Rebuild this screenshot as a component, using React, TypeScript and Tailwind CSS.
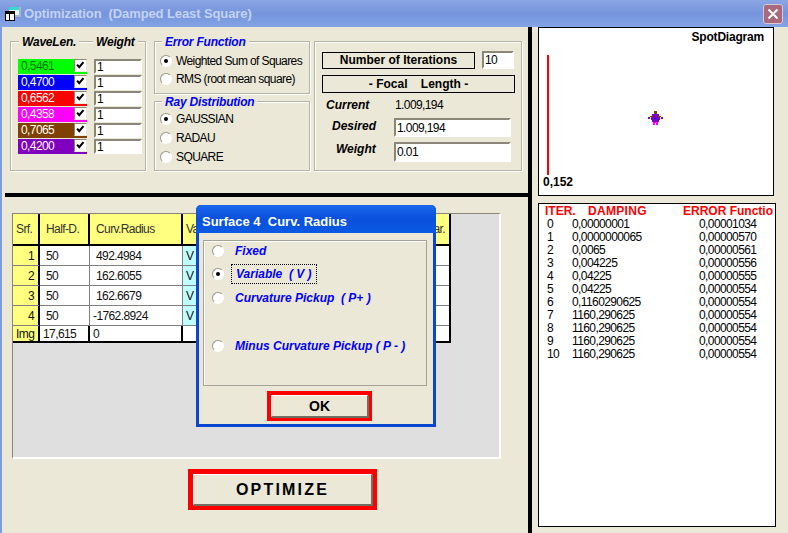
import React from "react";

const ui = "font-['Liberation_Sans',Arial,sans-serif]";

const waves = [
  { v: "0,5461", bg: "bg-[#00ff00]", text: "text-[#007000]" },
  { v: "0,4700", bg: "bg-[#0000ff]", text: "text-white" },
  { v: "0,6562", bg: "bg-[#ff0000]", text: "text-white" },
  { v: "0,4358", bg: "bg-[#ff00ff]", text: "text-white" },
  { v: "0,7065", bg: "bg-[#804000]", text: "text-white" },
  { v: "0,4200", bg: "bg-[#8000c0]", text: "text-white" },
];

const surfaces = [
  ["1", "50", "492.4984"],
  ["2", "50", "162.6055"],
  ["3", "50", "162.6679"],
  ["4", "50", "-1762.8924"],
];

const iters = [
  ["0", "0,00000001", "0,00001034"],
  ["1", "0,0000000065", "0,00000570"],
  ["2", "0,0065", "0,00000561"],
  ["3", "0,004225", "0,00000556"],
  ["4", "0,04225", "0,00000555"],
  ["5", "0,04225", "0,00000554"],
  ["6", "0,1160290625", "0,00000554"],
  ["7", "1160,290625", "0,00000554"],
  ["8", "1160,290625", "0,00000554"],
  ["9", "1160,290625", "0,00000554"],
  ["10", "1160,290625", "0,00000554"],
];

function Radio({ on }: { on?: boolean }) {
  return (
    <span className="w-[12px] h-[12px] shrink-0 rounded-full bg-white border border-[#9a968a] border-r-white border-b-white flex items-center justify-center">
      {on && <span className="w-[4px] h-[4px] rounded-full bg-black" />}
    </span>
  );
}

function Sunken({ children, className }: { children: React.ReactNode; className: string }) {
  return (
    <div className={`bg-white border-2 border-[#8a8778] border-r-white border-b-white flex items-center pl-[1px] leading-none text-black ${className}`}>
      {children}
    </div>
  );
}

function Legend({ children, className }: { children: React.ReactNode; className: string }) {
  return (
    <span className={`absolute top-[-7px] bg-[#ebe8d8] px-[3px] text-[12px] tracking-[-0.2px] leading-[14px] font-bold italic whitespace-nowrap ${className}`}>
      {children}
    </span>
  );
}

function Group({ children, className }: { children: React.ReactNode; className: string }) {
  return <div className={`relative border border-[#b5b3a6] shadow-[inset_1px_1px_0_#fff,1px_1px_0_#fff] ${className}`}>{children}</div>;
}

function Check() {
  return (
    <svg viewBox="0 0 13 13" className="w-[13px] h-[13px] shrink-0 bg-white border border-[#8a8778] border-r-[#ebe8d8] border-b-[#ebe8d8]">
      <path d="M2.5 5.5 L5 8.5 L10 2.5" fill="none" stroke="black" strokeWidth="2.5" />
    </svg>
  );
}

function RedButton({ label, className, inner }: { label: string; className: string; inner: string }) {
  return (
    <div className={`border-[#ff0000] ${className}`}>
      <div className={`w-full h-full bg-[#ebe8d8] border border-white border-r-[#716f64] border-b-[#716f64] shadow-[1px_1px_0_#716f64] flex items-center justify-center text-black font-bold ${inner}`}>
        {label}
      </div>
    </div>
  );
}

function SpotDots() {
  return (
    <svg viewBox="0 0 15 14" className="absolute left-[109px] top-[83px] w-[15px] h-[14px]" shapeRendering="crispEdges">
      <rect x="6" y="0" width="3" height="3" fill="#804000" />
      <rect x="4" y="3" width="7" height="2" fill="#8000c0" />
      <rect x="2" y="5" width="11" height="1" fill="#804000" />
      <rect x="5" y="5" width="5" height="1" fill="#8000c0" />
      <rect x="0" y="6" width="2" height="2" fill="#8000c0" />
      <rect x="13" y="6" width="2" height="2" fill="#8000c0" />
      <rect x="3" y="6" width="9" height="3" fill="#8000c0" />
      <rect x="6" y="7" width="3" height="1" fill="#0000ff" />
      <rect x="4" y="9" width="7" height="2" fill="#8000c0" />
      <rect x="5" y="11" width="5" height="3" fill="#ff00ff" />
      <rect x="7" y="12" width="1" height="2" fill="#ffffff" />
    </svg>
  );
}

export default function App() {
  return (
    <div className={`${ui} relative w-[788px] h-[533px] overflow-hidden bg-[#ebe8d8] flex flex-col text-[12px] tracking-[-0.6px] text-black`}>
      {/* title bar */}
      <div className="h-[27px] shrink-0 bg-gradient-to-b from-[#8aa6e4] via-[#7694dc] to-[#83a4e6] flex items-center pl-[5px] pr-[5px]">
        <svg viewBox="0 0 16 14" className="w-[16px] h-[14px] shrink-0">
          <rect x="5" y="0" width="11" height="10" fill="#a9b4cf" />
          <rect x="4" y="0" width="10" height="8" fill="#e8f8f8" />
          <rect x="4" y="0" width="10" height="3" fill="#38d8d0" />
          <rect x="0.5" y="4.5" width="9" height="9" fill="#fff" stroke="#000" />
          <rect x="1" y="5" width="8" height="2" fill="#000" />
          <rect x="4" y="7" width="1" height="6" fill="#000" />
        </svg>
        <span className="ml-[3px] mt-[1px] text-[13px] tracking-[-0.1px] font-bold text-[#c3d2f3] whitespace-pre">Optimization  (Damped Least Square)</span>
        <div className="ml-auto w-[20px] h-[20px] rounded-[3px] bg-[#a8687e] border border-[#d8c8d0] flex items-center justify-center">
          <svg viewBox="0 0 12 12" className="w-[12px] h-[12px]">
            <path d="M1.5 1.5 L10.5 10.5 M10.5 1.5 L1.5 10.5" stroke="white" strokeWidth="2" />
          </svg>
        </div>
      </div>

      <div className="flex-1 flex border-l-2 border-[#7f9de2] min-h-0">
        {/* left side */}
        <div className="w-[526px] shrink-0 flex flex-col">
          <div className="h-[166px] shrink-0 pt-[14px] pl-[8px] flex gap-[8px]">
            <Group className="w-[136px] h-[130px] pt-[17px] pl-[7px]">
              <Legend className="left-[8px]">WaveLen.</Legend>
              <Legend className="left-[82px]">Weight</Legend>
              <div className="flex flex-col gap-[1px]">
                {waves.map((w) => (
                  <div key={w.v} className="flex items-start h-[15px]">
                    <div className={`w-[69px] h-[15px] flex items-start justify-between ${w.bg}`}>
                      <span className={`pl-[3px] leading-[14px] ${w.text}`}>{w.v}</span>
                      <Check />
                    </div>
                    <Sunken className="ml-[7px] w-[48px] h-[15px]">1</Sunken>
                  </div>
                ))}
              </div>
            </Group>

            <div className="w-[156px] flex flex-col gap-[7px]">
              <Group className="h-[53px] pt-[13px] pl-[5px] flex flex-col gap-[6px]">
                <Legend className="left-[7px] text-[#0000ff]">Error Function</Legend>
                <label className="flex items-center gap-[4px] h-[12px] whitespace-nowrap">
                  <Radio on />
                  Weighted Sum of Squares
                </label>
                <label className="flex items-center gap-[4px] h-[12px] whitespace-nowrap">
                  <Radio />
                  RMS (root mean square)
                </label>
              </Group>
              <Group className="h-[70px] pt-[11px] pl-[5px] flex flex-col gap-[7px]">
                <Legend className="left-[7px] text-[#0000ff]">Ray Distribution</Legend>
                <label className="flex items-center gap-[4px] h-[12px]">
                  <Radio on />
                  GAUSSIAN
                </label>
                <label className="flex items-center gap-[4px] h-[12px]">
                  <Radio />
                  RADAU
                </label>
                <label className="flex items-center gap-[4px] h-[12px]">
                  <Radio />
                  SQUARE
                </label>
              </Group>
            </div>

            <Group className="w-[208px] h-[130px] pt-[9px] pl-[7px] ml-[-4px]">
              <div className="flex items-center">
                <div className="w-[153px] h-[17px] border border-black flex items-center justify-center tracking-normal font-bold">Number of Iterations</div>
                <Sunken className="ml-[7px] w-[32px] h-[18px]">10</Sunken>
              </div>
              <div className="mt-[6px] w-[193px] h-[18px] border border-black flex items-center justify-center tracking-normal font-bold whitespace-pre">- Focal    Length -</div>
              <div className="mt-[3px] h-[18px] flex items-center">
                <span className="w-[73px] pl-[4px] tracking-normal font-bold italic">Current</span>
                <span>1.009,194</span>
              </div>
              <div className="mt-[4px] flex items-center">
                <span className="w-[72px] pl-[10px] pb-[4px] leading-[14px] tracking-normal font-bold italic">Desired</span>
                <Sunken className="w-[117px] h-[19px]">1.009,194</Sunken>
              </div>
              <div className="mt-[5px] flex items-center">
                <span className="w-[72px] pl-[14px] pb-[6px] leading-[14px] tracking-normal font-bold italic">Weight</span>
                <Sunken className="w-[117px] h-[20px]">0.01</Sunken>
              </div>
            </Group>
          </div>

          <div className="ml-[3px] h-[4px] shrink-0 bg-black" />

          <div className="flex-1 pt-[16px] pl-[10px]">
            <div className="w-[489px] h-[246px] bg-[#dfdfdf] border-t border-l border-[#8a8778] border-r-2 border-b-2 border-r-white border-b-white">
              <div className="w-[438px] grid grid-cols-[27px_50px_93px_20px_1fr] grid-rows-[32px_20px_20px_20px_20px_15px] border-b-2 border-r-2 border-black bg-white text-[#111]">
                {["Srf.", "Half-D.", "Curv.Radius", "Va", "Var."].map((h, i) => (
                  <div key={i} className={`bg-[#ffff80] text-[#333] flex items-center border-b-2 border-black ${i < 3 ? "border-r-2" : ""} ${i === 0 ? "pl-[3px]" : i === 3 ? "pl-[3px]" : i === 4 ? "justify-end pr-[4px]" : "pl-[6px]"}`}>
                    {h}
                  </div>
                ))}
                {surfaces.map((s) => (
                  <React.Fragment key={s[0]}>
                    <div className="bg-[#ffff80] border-r-2 border-b border-r-black border-b-[#808080] flex items-center justify-end pr-[4px]">{s[0]}</div>
                    <div className="border-r border-b border-[#808080] flex items-center pl-[6px]">{s[1]}</div>
                    <div className="border-r border-b border-[#808080] flex items-center pl-[6px]">
                      <span className={s[2].startsWith("-") ? "ml-[-3px]" : ""}>{s[2]}</span>
                    </div>
                    <div className="bg-[#c0ffff] border-r border-b border-[#808080] flex items-center pl-[3px]">V</div>
                    <div className="border-b border-[#808080]" />
                  </React.Fragment>
                ))}
                <div className="bg-[#ffff80] border-r-2 border-black flex items-center pl-[3px]">Img</div>
                <div className="border-r-2 border-black flex items-center pl-[3px]">17,615</div>
                <div className="border-r-2 border-black flex items-center pl-[3px]">0</div>
                <div className="border-r border-[#808080]" />
                <div />
              </div>
            </div>
            <RedButton
              label="OPTIMIZE"
              className="ml-[176px] mt-[10px] w-[189px] h-[41px] border-[5px]"
              inner="text-[16px] tracking-[2.2px]"
            />
          </div>
        </div>

        <div className="w-[4px] shrink-0 bg-black" />

        {/* right side */}
        <div className="flex-1 pl-[6px] flex flex-col gap-[7px] pb-[6px]">
          <div className="relative w-[236px] h-[169px] shrink-0 bg-white border border-black">
            <div className="flex justify-end pr-[9px] tracking-[-0.2px] font-bold">SpotDiagram</div>
            <div className="absolute left-[8px] top-[27px] w-[2px] h-[120px] bg-[#ff0000]" />
            <div className="absolute left-[4px] bottom-[7px] tracking-normal font-bold leading-none">0,152</div>
            <SpotDots />
          </div>
          <div className="w-[238px] flex-1 bg-white border border-black pl-[6px] pt-[1px] overflow-hidden">
            <div className="flex font-bold tracking-normal text-[#ff0000] h-[11px] items-center whitespace-pre">
              <span className="w-[43px]">ITER.</span>
              <span className="w-[95px] tracking-[0.3px]">DAMPING</span>
              <span>ERROR Functio</span>
            </div>
            <div className="mt-[1px] flex flex-col">
              {iters.map((r) => (
                <div key={r[0]} className="flex h-[13px] items-center leading-none">
                  <span className="w-[27px] pl-[2px]">{r[0]}</span>
                  <span className="w-[127px]">{r[1]}</span>
                  <span>{r[2]}</span>
                </div>
              ))}
            </div>
          </div>
        </div>
      </div>

      {/* surface dialog */}
      <div className="absolute left-[196px] top-[205px] w-[240px] h-[222px] rounded-t-[5px] bg-[#0a46d0] flex flex-col">
        <div className="h-[28px] shrink-0 rounded-t-[5px] bg-gradient-to-b from-[#1a68ec] via-[#0a50dc] to-[#0a5ae4] flex items-center pt-[5px] pl-[6px] text-[13px] tracking-normal font-bold text-white whitespace-pre">
          Surface 4  Curv. Radius
        </div>
        <div className="flex-1 mx-[3px] mb-[3px] bg-[#ebe8d8] flex flex-col pt-[7px] items-start">
          <div className="ml-[4px] w-[224px] h-[146px] border border-[#a5a398] shadow-[inset_1px_1px_0_#fff] text-[#0000ff] tracking-normal font-bold italic pt-[2px] pl-[8px]">
            <label className="flex items-center gap-[11px] h-[16px]"><Radio /><span>Fixed</span></label>
            <label className="mt-[7px] flex items-center gap-[11px] h-[16px]">
              <Radio on />
              <span className="ml-[-3px] px-[4px] outline-1 outline-dotted outline-black whitespace-pre">Variable  ( V )</span>
            </label>
            <label className="mt-[8px] flex items-center gap-[11px] h-[16px] whitespace-pre"><Radio /><span>Curvature Pickup  ( P+ )</span></label>
            <label className="mt-[32px] flex items-center gap-[11px] h-[16px] whitespace-pre"><Radio /><span>Minus Curvature Pickup ( P - )</span></label>
          </div>
          <RedButton label="OK" className="mt-[5px] ml-[68px] w-[105px] h-[30px] border-[4px]" inner="text-[14px] tracking-normal" />
        </div>
      </div>
    </div>
  );
}
